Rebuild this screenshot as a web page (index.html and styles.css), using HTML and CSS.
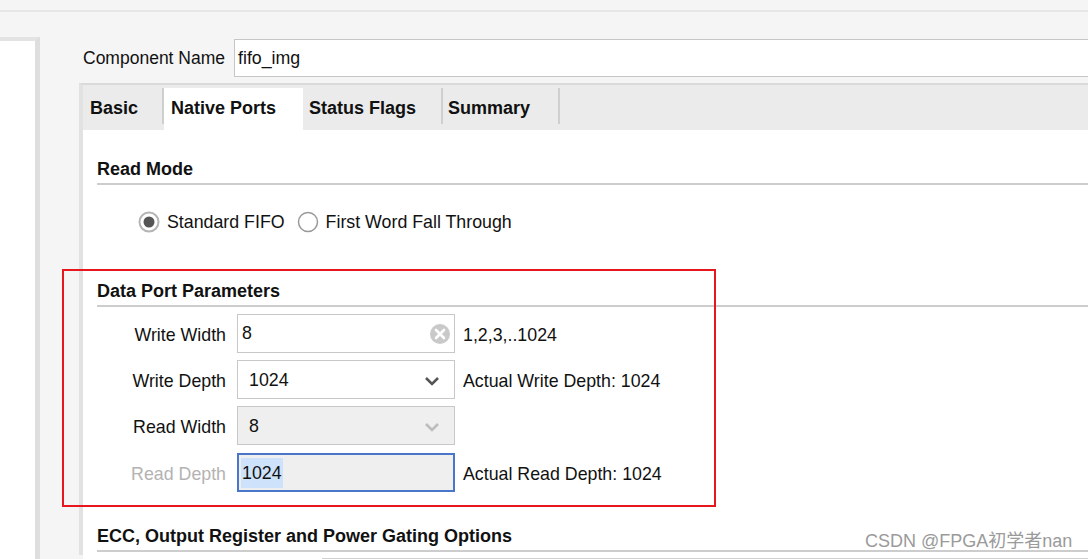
FILE: index.html
```html
<!DOCTYPE html>
<html>
<head>
<meta charset="utf-8">
<link rel="stylesheet" href="styles.css">
</head>
<body>
<div class="top"></div>
<div class="main">
  <aside class="left"></aside>
  <section class="right">
    <div class="name-row">
      <span class="name-label">Component Name</span>
      <div class="name-input">fifo_img</div>
    </div>
    <div class="tabpanel">
      <div class="tabbar">
        <div class="tab t-basic">Basic</div>
        <div class="tab t-native active">Native Ports</div>
        <div class="tab t-status">Status Flags</div>
        <div class="tab t-summary">Summary</div>
      </div>
      <div class="content">
        <div class="group-title first">Read Mode</div>
        <div class="radios">
          <label class="radio">
            <svg width="22" height="22" viewBox="0 0 22 22"><circle cx="11" cy="11" r="9.5" fill="#fff" stroke="#b5b5b5" stroke-width="2"/><circle cx="11" cy="11" r="5.5" fill="#555"/></svg>
            <span>Standard FIFO</span>
          </label>
          <label class="radio">
            <svg width="22" height="22" viewBox="0 0 22 22"><circle cx="11" cy="11" r="9.5" fill="#fff" stroke="#9a9a9a" stroke-width="1.5"/></svg>
            <span>First Word Fall Through</span>
          </label>
        </div>
        <div class="group-title dpp">Data Port Parameters</div>
        <div class="params">
          <div class="prow">
            <span class="plabel">Write Width</span>
            <div class="field f-ww"><span>8</span>
              <svg class="clear" width="22" height="22" viewBox="0 0 22 22"><circle cx="11" cy="11" r="10" fill="#c9c9c9"/><path d="M7 7 L15 15 M15 7 L7 15" stroke="#fff" stroke-width="2.6" stroke-linecap="round"/></svg>
            </div>
            <span class="pnote">1,2,3,..1024</span>
          </div>
          <div class="prow">
            <span class="plabel">Write Depth</span>
            <div class="field f-combo"><span>1024</span>
              <svg class="chev" width="16" height="10" viewBox="0 0 16 10"><path d="M2 2 L8 8 L14 2" fill="none" stroke="#555" stroke-width="2.6"/></svg>
            </div>
            <span class="pnote">Actual Write Depth: 1024</span>
          </div>
          <div class="prow">
            <span class="plabel">Read Width</span>
            <div class="field f-combo disabled"><span>8</span>
              <svg class="chev" width="16" height="10" viewBox="0 0 16 10"><path d="M2 2 L8 8 L14 2" fill="none" stroke="#bdbdbd" stroke-width="2.6"/></svg>
            </div>
          </div>
          <div class="prow last">
            <span class="plabel muted">Read Depth</span>
            <div class="field f-focus"><span class="sel">1024</span></div>
            <span class="pnote">Actual Read Depth: 1024</span>
          </div>
        </div>
        <div class="group-title ecc">ECC, Output Register and Power Gating Options</div>
        <div class="next-box"></div>
      </div>
    </div>
  </section>
</div>
<div class="annot"></div>
<div class="wm">CSDN @FPGA初学者nan</div>
</body>
</html>
```
FILE: styles.css
```css
html, body {
  margin: 0;
  padding: 0;
  height: 559px;
  overflow: hidden;
}
body {
  background: #f5f5f5;
  font-family: "Liberation Sans", Arial, "Noto Sans CJK SC", sans-serif;
  color: #111;
  font-size: 17.8px;
  position: relative;
}
.top {
  height: 10px;
  border-bottom: 2px solid #e6e6e6;
}
.main {
  display: flex;
  height: 547px;
}
.left {
  width: 35px;
  margin-top: 25px;
  background: #fff;
  border-top: 4px solid #e3e3e3;
  border-right: 5px solid #dedede;
  flex: none;
}
.right {
  flex: 1;
  padding-left: 39px;
  min-width: 0;
}
.name-row {
  margin-top: 27px;
  padding-left: 4px;
  display: flex;
  align-items: center;
  height: 38px;
}
.name-label {
  width: 151px;
  flex: none;
  font-size: 17.5px;
}
.name-input {
  flex: 1;
  height: 38px;
  box-sizing: border-box;
  background: #fff;
  border: 1px solid #c6c6c6;
  border-right: none;
  padding-left: 3px;
  line-height: 36px;
}
.tabpanel {
  margin-top: 6px;
  border-top: 2px solid #dadada;
  border-left: 4px solid #e2e2e2;
  height: 470px;
  display: flex;
  flex-direction: column;
}
.tabbar {
  background: #ebebeb;
  height: 45px;
  box-sizing: border-box;
  padding-top: 3px;
  display: flex;
}
.tab {
  height: 42px;
  line-height: 40px;
  font-weight: bold;
  font-size: 18px;
  padding-left: 7px;
  box-sizing: border-box;
  position: relative;
}
.tab::after {
  content: "";
  position: absolute;
  right: 0;
  top: 0;
  height: 36px;
  width: 2px;
  background: #cfcfcf;
}
.t-basic { width: 81px; }
.t-native { width: 139px; padding-left: 7px; }
.t-status { width: 140px; padding-left: 6px; }
.t-summary { width: 117px; padding-left: 5px; }
.tab.active { background: #fff; }
.tab.active::after { display: none; }
.content {
  flex: 1;
  background: #fff;
  padding-left: 14px;
}
.group-title {
  font-weight: bold;
  font-size: 18px;
  line-height: 22px;
  padding-bottom: 3px;
  border-bottom: 2px solid #cdcdcd;
}
.group-title.first { margin-top: 28px; }
.group-title.dpp { margin-top: 46px; }
.group-title.ecc { margin-top: 33px; }
.radios {
  margin-top: 25px;
  margin-left: 41px;
  display: flex;
  align-items: center;
  height: 24px;
}
.radio {
  display: flex;
  align-items: center;
  gap: 7px;
  margin-right: 12px;
}
.radio svg { flex: none; }
.params {
  margin-top: 7px;
  display: flex;
  flex-direction: column;
  gap: 7px;
}
.prow {
  display: flex;
  align-items: center;
  height: 39px;
}
.prow.last { margin-top: 1px; }
.plabel {
  width: 129px;
  text-align: right;
  flex: none;
  margin-right: 11px;
  padding-top: 4px;
}
.plabel.muted { color: #b3b3b3; }
.field {
  width: 218px;
  height: 39px;
  box-sizing: border-box;
  border: 1px solid #c8c8c8;
  background: #fff;
  display: flex;
  align-items: center;
  flex: none;
  position: relative;
}
.f-ww { padding-left: 4px; }
.f-ww .clear { position: absolute; right: 3px; top: 8px; }
.f-combo { padding-left: 11px; padding-top: 2px; }
.f-combo .chev { position: absolute; right: 14px; top: 15px; }
.field.disabled { background: #efefef; }
.f-focus {
  border: 2px solid #4a76c9;
  background: #efefef;
  padding-left: 2px;
}
.sel {
  background: #cfe2fb;
  line-height: 30px;
  padding: 0 1px;
}
.pnote {
  margin-left: 8px;
  padding-top: 4px;
}
.next-box {
  margin-left: 225px;
  margin-top: 6px;
  height: 12px;
  border-top: 2px solid #cfcfcf;
  border-left: 1px solid #dcdcdc;
}
.annot {
  position: absolute;
  left: 62px;
  top: 269px;
  width: 650px;
  height: 234px;
  border: 2px solid #e8161f;
}
.wm {
  position: absolute;
  left: 865px;
  top: 526px;
  font-size: 18px;
  color: #9a9a9a;
  white-space: nowrap;
}
```
